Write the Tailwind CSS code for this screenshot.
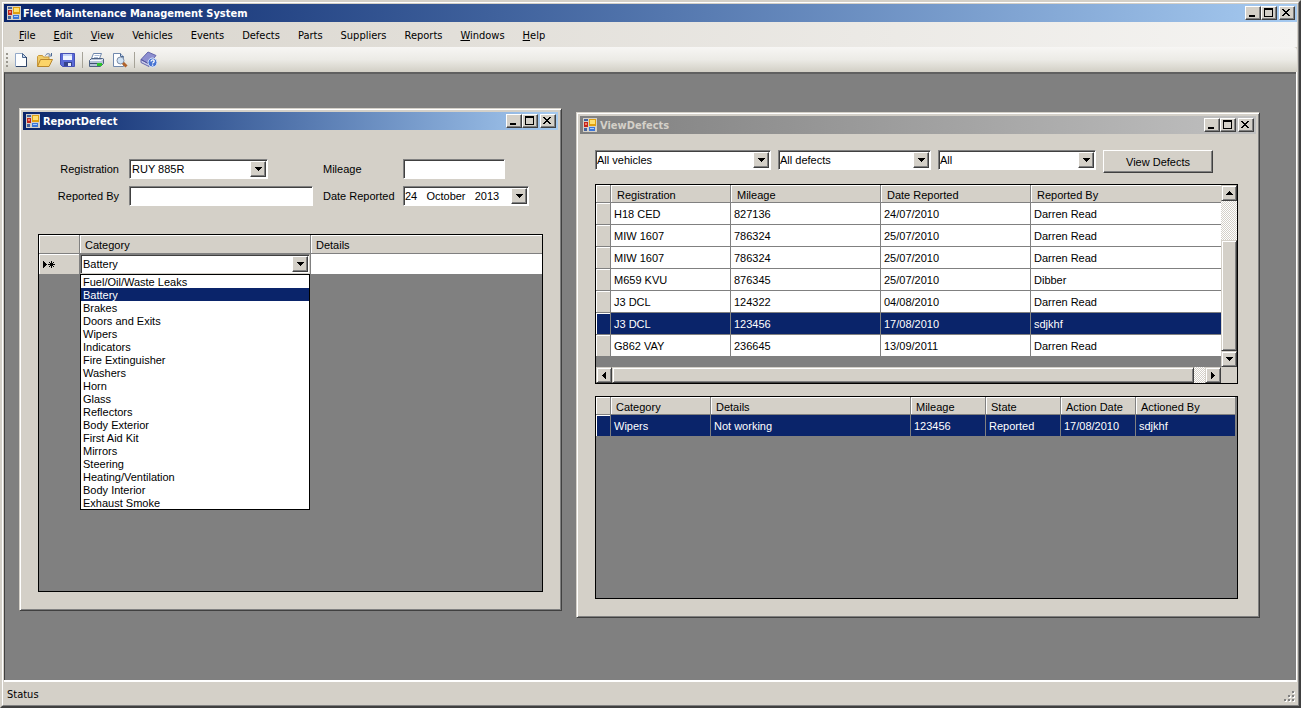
<!DOCTYPE html>
<html lang="en">
  <head>
    <meta charset="UTF-8" />
    <meta name="viewport" content="width=device-width, initial-scale=1.0" />
    <title>Fleet Maintenance Management System</title>
    <script src="https://cdn.jsdelivr.net/npm/@tailwindcss/browser@4"></script>
  </head>
  <body
    class="flex h-screen flex-col overflow-hidden border-2 border-t-[#d4d0c8] border-l-[#d4d0c8] border-r-[#404040] border-b-[#404040] bg-[#d4d0c8] font-['Liberation_Sans',sans-serif] text-[11px] leading-[13px] text-black"
  >
    <!-- shared icons -->
    <svg class="hidden">
      <symbol id="app" viewBox="0 0 14 14">
        <path d="M0 0h14v14H0z" fill="#d4d0c8" />
        <path d="M1 1h4v2H1zM1 10h3v3H1z" fill="#47639c" />
        <path d="M1 4h4v5H1z" fill="#c3271b" />
        <path d="M2 5h2v2H2z" fill="#f08070" />
        <path d="M6 1h7v7H6z" fill="#e0a010" />
        <path d="M7 2h5v4H7z" fill="#ffe070" />
        <path d="M6 9h6v4H6z" fill="#3c76d8" />
        <path d="M7 10h4v1H7z" fill="#a5cbff" />
      </symbol>
      <symbol id="min" viewBox="0 0 12 10"><path d="M3 7h6v2H3z" /></symbol>
      <symbol id="max" viewBox="0 0 12 10">
        <path d="M2 0h9v9H2zM3 2v6h7V2z" fill-rule="evenodd" />
      </symbol>
      <symbol id="close" viewBox="0 0 12 10">
        <path
          d="M2 1h2v1h1v1h2V2h1V1h2v1H9v1H8v1H7v1h1v1h1v1h1v1H8V7H7V6H5v1H4v1H2V7h1V6h1V5h1V4H4V3H3V2H2z"
        />
      </symbol>
      <symbol id="down" viewBox="0 0 7 4"><path d="M0 0h7v1H6v1H5v1H4v1H3V3H2V2H1V1H0z" /></symbol>
      <symbol id="up" viewBox="0 0 7 4"><path d="M3 0h1v1h1v1h1v1h1v1H0V3h1V2h1V1h1z" /></symbol>
      <symbol id="right" viewBox="0 0 4 7"><path d="M0 0h1v1h1v1h1v1h1v1H3v1H2v1H1v1H0z" /></symbol>
      <symbol id="left" viewBox="0 0 4 7"><path d="M3 0h1v7H3V6H2V5H1V4H0V3h1V2h1V1h1z" /></symbol>
    </svg>

    <div
      class="flex min-h-0 flex-1 flex-col border border-t-white border-l-white border-r-[#808080] border-b-[#808080] px-px pt-px"
    >
      <!-- title bar -->
      <header
        class="flex h-[18px] shrink-0 items-center bg-linear-to-r from-[#0a246a] to-[#a6caf0] pr-[2px] pl-[3px] font-['DejaVu_Sans_Condensed',sans-serif] font-bold text-white"
      >
        <svg class="mr-[2px] size-[14px]"><use href="#app" /></svg>
        <h1 class="flex-1">Fleet Maintenance Management System</h1>
        <div class="flex text-black">
          <button aria-label="Minimize" class="h-[14px] w-4 border border-t-white border-l-white border-r-[#404040] border-b-[#404040] bg-[#d4d0c8] shadow-[inset_-1px_-1px_#808080]"><svg class="h-[10px] w-3"><use href="#min" /></svg></button>
          <button aria-label="Maximize" class="h-[14px] w-4 border border-t-white border-l-white border-r-[#404040] border-b-[#404040] bg-[#d4d0c8] shadow-[inset_-1px_-1px_#808080]"><svg class="h-[10px] w-3"><use href="#max" /></svg></button>
          <button aria-label="Close" class="ml-[2px] h-[14px] w-4 border border-t-white border-l-white border-r-[#404040] border-b-[#404040] bg-[#d4d0c8] shadow-[inset_-1px_-1px_#808080]"><svg class="h-[10px] w-3"><use href="#close" /></svg></button>
        </div>
      </header>

      <!-- menu -->
      <nav
        class="flex h-[25px] shrink-0 items-center gap-[18px] bg-linear-to-r from-[#d8d4cc] to-[#f5f4f2] pt-[2px] pl-[15px] font-['DejaVu_Sans_Condensed',sans-serif]"
      >
        <a href="#"><u>F</u>ile</a>
        <a href="#"><u>E</u>dit</a>
        <a href="#"><u>V</u>iew</a>
        <a href="#">Vehicles</a>
        <a href="#">Events</a>
        <a href="#">Defects</a>
        <a href="#">Parts</a>
        <a href="#">Suppliers</a>
        <a href="#">Reports</a>
        <a href="#"><u>W</u>indows</a>
        <a href="#"><u>H</u>elp</a>
      </nav>

      <!-- toolbar -->
      <div
        class="flex h-[25px] shrink-0 items-center rounded-r-sm bg-linear-to-b from-[#f7f6f4] via-[#ecebe6] to-[#d2cfc5] pl-[2px]"
      >
        <svg class="mr-1 h-4 w-[3px]" fill="#9a978f">
          <path d="M0 1h2v2H0zM0 5h2v2H0zM0 9h2v2H0zM0 13h2v2H0z" />
        </svg>
        <button aria-label="New" class="mr-[7px]">
          <svg class="h-4 w-4" viewBox="0 0 16 16">
            <path d="M2.500 1.500h7l4 4v9h-11z" fill="#fdfeff" stroke="#93a9c9" />
            <path d="M9.500 1.500v4h4z" fill="#c9d8ee" stroke="#4a668f" />
            <path d="M13.500 5v9.500H3" fill="none" stroke="#2f4468" />
          </svg>
        </button>
        <button aria-label="Open" class="mr-[7px]">
          <svg class="h-4 w-[17px]" viewBox="0 0 17 16">
            <path d="M1.500 14V4.500l1-1h4l1 1.500h5.500V8" fill="#f0cc68" stroke="#c9983a" />
            <path d="M1.500 14.500l3-7h12l-3.500 7z" fill="#fcd468" stroke="#b8862c" />
            <path d="M9.500 3.500c1-2 3.500-2.500 5-.5M15.500 1v3h-3" fill="none" stroke="#4d6a96" />
          </svg>
        </button>
        <button aria-label="Save" class="mr-[7px]">
          <svg class="h-4 w-[15px]" viewBox="0 0 15 16">
            <path d="M.5 1.500h14v13h-12l-2-2z" fill="#5a6ad8" stroke="#4650b4" />
            <path d="M3 2h9v6H3z" fill="#eef3ff" />
            <path d="M3 2h9v2H3z" fill="#c4d2f7" />
            <path d="M4 10h8v4H4z" fill="#36438c" />
            <path d="M8 11h3v3H8z" fill="#e6ecfa" />
          </svg>
        </button>
        <span class="mr-[5px] h-4 w-px bg-[#a6a398]"></span>
        <button aria-label="Print" class="mr-[7px]">
          <svg class="h-4 w-[17px]" viewBox="0 0 17 16">
            <path d="M5.500 1.500h8l-2 5h-8z" fill="#fff" stroke="#6d86ac" />
            <path d="M6.500 3.500h5M6 5.500h4" stroke="#a9bbd6" />
            <path d="M1.500 8.500l2-2h12v5l-3 3h-11z" fill="#b4c1d6" stroke="#4d6182" />
            <path d="M2 8.500h11l2.500-2" fill="none" stroke="#f4f8ff" />
            <path d="M2 11.500h10" stroke="#3c4f70" />
            <path d="M9 11h5v3H9z" fill="#2cc22c" />
          </svg>
        </button>
        <button aria-label="Print Preview" class="mr-[6px]">
          <svg class="h-4 w-4" viewBox="0 0 16 16">
            <path d="M1.500 1.500h7l3 3v10h-10z" fill="#fdfeff" stroke="#7189ad" />
            <path d="M8.500 1.500v3h3" fill="#c9d8ee" stroke="#4a668f" />
            <circle cx="8.500" cy="8.500" r="3.500" fill="#cfe2f5" stroke="#7f8ea5" />
            <path d="M11 11l3.500 3.500" stroke="#b0622a" stroke-width="3" />
          </svg>
        </button>
        <span class="mr-[5px] h-4 w-px bg-[#a6a398]"></span>
        <button aria-label="Help">
          <svg class="h-[17px] w-[18px]" viewBox="0 0 18 17">
            <path d="M1 8.500L8 1l8 3.500L9 13z" fill="#8d8fd0" stroke="#6466ac" />
            <path d="M1 8.500v3l8 4V13z" fill="#c9cbe8" stroke="#6466ac" />
            <path d="M1 8.500l8 4.500" stroke="#5556a0" />
            <circle cx="12.500" cy="11.500" r="4.500" fill="#4673d2" stroke="#dfe8fb" />
            <path d="M11 10.500c0-2.200 3.200-2.200 3.200-.3 0 1.200-1.600 1.200-1.600 2.300M12.600 13.500v1.200" fill="none" stroke="#fff" stroke-width="1.300" />
          </svg>
        </button>
      </div>

      <!-- MDI area -->
      <main
        class="relative mr-px min-h-0 flex-1 border-t-2 border-l border-t-[#606060] border-l-[#404040] bg-[#808080] shadow-[1px_0_#fff,0_2px_#fff,1px_2px_#fff]"
      >
        <!-- ReportDefect -->
        <section
          class="absolute top-[34px] left-[14px] flex h-[503px] w-[543px] flex-col border border-t-[#d4d0c8] border-l-[#d4d0c8] border-r-[#404040] border-b-[#404040] bg-[#d4d0c8] p-[3px] shadow-[inset_1px_1px_#fff,inset_-1px_-1px_#808080]"
        >
          <header
            class="flex h-[18px] shrink-0 items-center bg-linear-to-r from-[#0a246a] to-[#a6caf0] pr-[2px] pl-[3px] font-['DejaVu_Sans_Condensed',sans-serif] font-bold text-white"
          >
            <svg class="mr-[3px] size-[14px]"><use href="#app" /></svg>
            <h2 class="flex-1">ReportDefect</h2>
            <div class="flex text-black">
              <button aria-label="Minimize" class="h-[14px] w-4 border border-t-white border-l-white border-r-[#404040] border-b-[#404040] bg-[#d4d0c8] shadow-[inset_-1px_-1px_#808080]"><svg class="h-[10px] w-3"><use href="#min" /></svg></button>
              <button aria-label="Maximize" class="h-[14px] w-4 border border-t-white border-l-white border-r-[#404040] border-b-[#404040] bg-[#d4d0c8] shadow-[inset_-1px_-1px_#808080]"><svg class="h-[10px] w-3"><use href="#max" /></svg></button>
              <button aria-label="Close" class="ml-[2px] h-[14px] w-4 border border-t-white border-l-white border-r-[#404040] border-b-[#404040] bg-[#d4d0c8] shadow-[inset_-1px_-1px_#808080]"><svg class="h-[10px] w-3"><use href="#close" /></svg></button>
            </div>
          </header>

          <form
            class="mt-[29px] grid grid-cols-[96px_184px_70px_126px] items-center gap-x-[10px] gap-y-[7px]"
          >
            <label for="registration" class="text-right">Registration</label>
            <div class="relative w-[139px]">
              <select id="registration" class="block h-5 w-full appearance-none border border-t-[#808080] border-l-[#808080] border-r-white border-b-white bg-white pl-[2px] shadow-[inset_1px_1px_#404040]">
                <option>RUY 885R</option>
              </select>
              <span class="pointer-events-none absolute inset-y-[2px] right-[2px] grid w-4 place-items-center border border-t-white border-l-white border-r-[#404040] border-b-[#404040] bg-[#d4d0c8] shadow-[inset_-1px_-1px_#808080]"><svg class="h-1 w-[7px]"><use href="#down" /></svg></span>
            </div>
            <label for="mileage">Mileage</label>
            <input id="mileage" type="text" class="h-5 w-[102px] border border-t-[#808080] border-l-[#808080] border-r-white border-b-white bg-white px-[2px] shadow-[inset_1px_1px_#404040]" />
            <label for="reportedBy" class="text-right">Reported By</label>
            <input id="reportedBy" type="text" class="h-5 w-full border border-t-[#808080] border-l-[#808080] border-r-white border-b-white bg-white px-[2px] shadow-[inset_1px_1px_#404040]" />
            <label for="dateReported" class="whitespace-nowrap">Date Reported</label>
            <div class="relative">
              <input id="dateReported" type="text" value="24&nbsp;&nbsp; October &nbsp; 2013" class="block h-5 w-full border border-t-[#808080] border-l-[#808080] border-r-white border-b-white bg-white pl-px shadow-[inset_1px_1px_#404040]" />
              <button type="button" aria-label="Open calendar" class="absolute inset-y-[2px] right-[2px] grid w-4 place-items-center border border-t-white border-l-white border-r-[#404040] border-b-[#404040] bg-[#d4d0c8] shadow-[inset_-1px_-1px_#808080]"><svg class="h-1 w-[7px]"><use href="#down" /></svg></button>
            </div>
          </form>

          <div class="relative mx-[15px] mt-7 mb-[15px] flex-1 border border-black bg-[#808080]">
            <table class="w-full table-fixed border-separate border-spacing-0 text-left">
              <thead class="bg-[#d4d0c8]">
                <tr class="h-[19px] [&>th]:border-r [&>th]:border-b [&>th]:border-[#808080] [&>th]:px-[5px] [&>th]:pt-[2px] [&>th]:font-normal [&>th]:shadow-[inset_1px_1px_#fff]">
                  <th class="w-[41px]"></th>
                  <th class="w-[231px]">Category</th>
                  <th class="border-r-0!">Details</th>
                </tr>
              </thead>
              <tbody class="bg-white">
                <tr class="h-5">
                  <th class="border-r border-[#808080] bg-[#d4d0c8] pl-1 shadow-[inset_1px_1px_#fff]">
                    <svg class="h-[9px] w-3" viewBox="0 0 12 9">
                      <path d="M0 1h1v1h1v1h1v1h1v1H3v1H2v1H1v1H0z" />
                      <path d="M8.500 1v7M5 4.500h7M6 2l5 5M11 2L6 7" stroke="#000" />
                    </svg>
                  </th>
                  <td class="border-r border-[#808080]">
                    <div class="relative">
                      <select aria-label="Category" class="block h-5 w-full appearance-none border border-t-[#808080] border-l-[#808080] border-r-[#d4d0c8] border-b-[#d4d0c8] bg-white pl-[2px] shadow-[inset_1px_1px_#404040]">
                        <option>Battery</option>
                      </select>
                      <span class="pointer-events-none absolute inset-y-[2px] right-[2px] grid w-4 place-items-center border border-t-white border-l-white border-r-[#404040] border-b-[#404040] bg-[#d4d0c8] shadow-[inset_-1px_-1px_#808080]"><svg class="h-1 w-[7px]"><use href="#down" /></svg></span>
                    </div>
                  </td>
                  <td></td>
                </tr>
              </tbody>
            </table>
            <!-- open drop-down list -->
            <ul role="listbox" aria-label="Category list" class="absolute top-[39px] left-[41px] w-[230px] border border-black bg-white [&>li]:pt-px [&>li]:pl-[2px] [&>li]:leading-3">
              <li role="option">Fuel/Oil/Waste Leaks</li>
              <li role="option" aria-selected="true" class="bg-[#0a246a] text-white">Battery</li>
              <li role="option">Brakes</li>
              <li role="option">Doors and Exits</li>
              <li role="option">Wipers</li>
              <li role="option">Indicators</li>
              <li role="option">Fire Extinguisher</li>
              <li role="option">Washers</li>
              <li role="option">Horn</li>
              <li role="option">Glass</li>
              <li role="option">Reflectors</li>
              <li role="option">Body Exterior</li>
              <li role="option">First Aid Kit</li>
              <li role="option">Mirrors</li>
              <li role="option">Steering</li>
              <li role="option">Heating/Ventilation</li>
              <li role="option">Body Interior</li>
              <li role="option">Exhaust Smoke</li>
            </ul>
          </div>
        </section>

        <!-- ViewDefects -->
        <section
          class="absolute top-[38px] left-[571px] flex h-[506px] w-[684px] flex-col border border-t-[#d4d0c8] border-l-[#d4d0c8] border-r-[#404040] border-b-[#404040] bg-[#d4d0c8] p-[3px] shadow-[inset_1px_1px_#fff,inset_-1px_-1px_#808080]"
        >
          <header
            class="flex h-[18px] shrink-0 items-center bg-linear-to-r from-[#808080] to-[#c0c0c0] pr-[2px] pl-[3px] font-['DejaVu_Sans_Condensed',sans-serif] font-bold text-[#d4d0c8]"
          >
            <svg class="mr-[3px] size-[14px]"><use href="#app" /></svg>
            <h2 class="flex-1">ViewDefects</h2>
            <div class="flex text-black">
              <button aria-label="Minimize" class="h-[14px] w-4 border border-t-white border-l-white border-r-[#404040] border-b-[#404040] bg-[#d4d0c8] shadow-[inset_-1px_-1px_#808080]"><svg class="h-[10px] w-3"><use href="#min" /></svg></button>
              <button aria-label="Maximize" class="h-[14px] w-4 border border-t-white border-l-white border-r-[#404040] border-b-[#404040] bg-[#d4d0c8] shadow-[inset_-1px_-1px_#808080]"><svg class="h-[10px] w-3"><use href="#max" /></svg></button>
              <button aria-label="Close" class="ml-[2px] h-[14px] w-4 border border-t-white border-l-white border-r-[#404040] border-b-[#404040] bg-[#d4d0c8] shadow-[inset_-1px_-1px_#808080]"><svg class="h-[10px] w-3"><use href="#close" /></svg></button>
            </div>
          </header>

          <form class="mt-4 ml-[15px] flex gap-[7px]">
            <div class="relative w-[176px]">
              <select aria-label="Vehicles" class="block h-5 w-full appearance-none border border-t-[#808080] border-l-[#808080] border-r-white border-b-white bg-white pl-px shadow-[inset_1px_1px_#404040]">
                <option>All vehicles</option>
              </select>
              <span class="pointer-events-none absolute top-[2px] right-[2px] grid h-4 w-4 place-items-center border border-t-white border-l-white border-r-[#404040] border-b-[#404040] bg-[#d4d0c8] shadow-[inset_-1px_-1px_#808080]"><svg class="h-1 w-[7px]"><use href="#down" /></svg></span>
            </div>
            <div class="relative w-[153px]">
              <select aria-label="Defects" class="block h-5 w-full appearance-none border border-t-[#808080] border-l-[#808080] border-r-white border-b-white bg-white pl-px shadow-[inset_1px_1px_#404040]">
                <option>All defects</option>
              </select>
              <span class="pointer-events-none absolute top-[2px] right-[2px] grid h-4 w-4 place-items-center border border-t-white border-l-white border-r-[#404040] border-b-[#404040] bg-[#d4d0c8] shadow-[inset_-1px_-1px_#808080]"><svg class="h-1 w-[7px]"><use href="#down" /></svg></span>
            </div>
            <div class="relative w-[158px]">
              <select aria-label="State" class="block h-5 w-full appearance-none border border-t-[#808080] border-l-[#808080] border-r-white border-b-white bg-white pl-px shadow-[inset_1px_1px_#404040]">
                <option>All</option>
              </select>
              <span class="pointer-events-none absolute top-[2px] right-[2px] grid h-4 w-4 place-items-center border border-t-white border-l-white border-r-[#404040] border-b-[#404040] bg-[#d4d0c8] shadow-[inset_-1px_-1px_#808080]"><svg class="h-1 w-[7px]"><use href="#down" /></svg></span>
            </div>
            <button type="button" class="h-[23px] w-[110px] border border-t-white border-l-white border-r-[#404040] border-b-[#404040] pt-px shadow-[inset_-1px_-1px_#808080]">View Defects</button>
          </form>

          <!-- defects grid -->
          <div class="mt-[11px] mr-[18px] ml-[15px] grid h-[200px] shrink-0 grid-cols-[1fr_16px] grid-rows-[1fr_16px] border border-black bg-[#808080]">
            <div class="overflow-hidden">
              <table class="w-full table-fixed border-separate border-spacing-0 text-left [&_td]:border-r [&_td]:border-b [&_td]:border-[#808080] [&_td]:px-[3px] [&_td]:pt-[2px] [&_td:last-child]:border-r-0 [&_tbody_th]:border-r [&_tbody_th]:border-b [&_tbody_th]:border-[#808080] [&_tbody_th]:shadow-[inset_1px_1px_#fff] [&_tbody_tr]:h-[22px]">
                <thead class="bg-[#d4d0c8]">
                  <tr class="h-[18px] [&>th]:border-r [&>th]:border-b [&>th]:border-[#808080] [&>th]:px-[6px] [&>th]:pt-[3px] [&>th]:font-normal [&>th]:shadow-[inset_1px_1px_#fff]">
                    <th class="w-[15px] px-0!"></th>
                    <th class="w-[120px]">Registration</th>
                    <th class="w-[150px]">Mileage</th>
                    <th class="w-[150px]">Date Reported</th>
                    <th class="border-r-0!">Reported By</th>
                  </tr>
                </thead>
                <tbody class="bg-white">
                  <tr><th class="bg-[#d4d0c8]"></th><td>H18 CED</td><td>827136</td><td>24/07/2010</td><td>Darren Read</td></tr>
                  <tr><th class="bg-[#d4d0c8]"></th><td>MIW 1607</td><td>786324</td><td>25/07/2010</td><td>Darren Read</td></tr>
                  <tr><th class="bg-[#d4d0c8]"></th><td>MIW 1607</td><td>786324</td><td>25/07/2010</td><td>Darren Read</td></tr>
                  <tr><th class="bg-[#d4d0c8]"></th><td>M659 KVU</td><td>876345</td><td>25/07/2010</td><td>Dibber</td></tr>
                  <tr><th class="bg-[#d4d0c8]"></th><td>J3 DCL</td><td>124322</td><td>04/08/2010</td><td>Darren Read</td></tr>
                  <tr class="bg-[#0a246a] text-white"><th></th><td>J3 DCL</td><td>123456</td><td>17/08/2010</td><td>sdjkhf</td></tr>
                  <tr><th class="bg-[#d4d0c8]"></th><td>G862 VAY</td><td>236645</td><td>13/09/2011</td><td>Darren Read</td></tr>
                </tbody>
              </table>
            </div>
            <!-- vertical scroll bar -->
            <div class="flex flex-col bg-[conic-gradient(#fff_25%,#d4d0c8_0_50%,#fff_0_75%,#d4d0c8_0)] bg-size-[2px_2px]">
              <button aria-label="Scroll up" class="grid h-4 place-items-center border border-t-[#d4d0c8] border-l-[#d4d0c8] border-r-[#404040] border-b-[#404040] bg-[#d4d0c8] shadow-[inset_1px_1px_#fff,inset_-1px_-1px_#808080]"><svg class="h-1 w-[7px]"><use href="#up" /></svg></button>
              <div class="mt-[39px] flex-1 border border-t-[#d4d0c8] border-l-[#d4d0c8] border-r-[#404040] border-b-[#404040] bg-[#d4d0c8] shadow-[inset_1px_1px_#fff,inset_-1px_-1px_#808080]"></div>
              <button aria-label="Scroll down" class="grid h-4 place-items-center border border-t-[#d4d0c8] border-l-[#d4d0c8] border-r-[#404040] border-b-[#404040] bg-[#d4d0c8] shadow-[inset_1px_1px_#fff,inset_-1px_-1px_#808080]"><svg class="h-1 w-[7px]"><use href="#down" /></svg></button>
            </div>
            <!-- horizontal scroll bar -->
            <div class="flex bg-[conic-gradient(#fff_25%,#d4d0c8_0_50%,#fff_0_75%,#d4d0c8_0)] bg-size-[2px_2px]">
              <button aria-label="Scroll left" class="grid w-4 place-items-center border border-t-[#d4d0c8] border-l-[#d4d0c8] border-r-[#404040] border-b-[#404040] bg-[#d4d0c8] shadow-[inset_1px_1px_#fff,inset_-1px_-1px_#808080]"><svg class="h-[7px] w-1"><use href="#left" /></svg></button>
              <div class="mr-[11px] flex-1 border border-t-[#d4d0c8] border-l-[#d4d0c8] border-r-[#404040] border-b-[#404040] bg-[#d4d0c8] shadow-[inset_1px_1px_#fff,inset_-1px_-1px_#808080]"></div>
              <button aria-label="Scroll right" class="grid w-4 place-items-center border border-t-[#d4d0c8] border-l-[#d4d0c8] border-r-[#404040] border-b-[#404040] bg-[#d4d0c8] shadow-[inset_1px_1px_#fff,inset_-1px_-1px_#808080]"><svg class="h-[7px] w-1"><use href="#right" /></svg></button>
            </div>
            <div class="bg-[#d4d0c8]"></div>
          </div>

          <!-- details grid -->
          <div class="mt-3 mr-[18px] mb-[15px] ml-[15px] flex-1 border border-black bg-[#808080] pr-px">
            <table class="w-full table-fixed border-separate border-spacing-0 text-left">
              <thead class="bg-[#d4d0c8]">
                <tr class="h-[18px] [&>th]:border-r [&>th]:border-b [&>th]:border-[#808080] [&>th]:px-[5px] [&>th]:pt-[3px] [&>th]:font-normal [&>th]:shadow-[inset_1px_1px_#fff]">
                  <th class="w-[15px] px-0!"></th>
                  <th class="w-[100px]">Category</th>
                  <th class="w-[200px]">Details</th>
                  <th class="w-[75px]">Mileage</th>
                  <th class="w-[75px]">State</th>
                  <th class="w-[75px]">Action Date</th>
                  <th>Actioned By</th>
                </tr>
              </thead>
              <tbody class="bg-[#0a246a] text-white">
                <tr class="h-[22px] [&>*]:border-r [&>*]:border-b [&>*]:border-[#808080] [&>td]:px-[3px] [&>td]:pt-[2px]">
                  <th class="shadow-[inset_1px_1px_#fff]"></th>
                  <td>Wipers</td>
                  <td>Not working</td>
                  <td>123456</td>
                  <td>Reported</td>
                  <td>17/08/2010</td>
                  <td>sdjkhf</td>
                </tr>
              </tbody>
            </table>
          </div>
        </section>
      </main>

      <!-- status bar -->
      <footer
        class="mt-[2px] flex h-[23px] shrink-0 items-center justify-between pt-[2px] pl-[3px] font-['DejaVu_Sans_Condensed',sans-serif]"
      >
        <span>Status</span>
        <svg class="mr-[2px] mb-[3px] h-[11px] w-[11px] self-end" viewBox="0 0 11 11">
          <path d="M9 1h2v2H9zM5 5h2v2H5zM9 5h2v2H9zM1 9h2v2H1zM5 9h2v2H5zM9 9h2v2H9z" fill="#fff" />
          <path d="M8 0h2v2H8zM4 4h2v2H4zM8 4h2v2H8zM0 8h2v2H0zM4 8h2v2H4zM8 8h2v2H8z" fill="#808080" />
        </svg>
      </footer>
    </div>
  </body>
</html>
